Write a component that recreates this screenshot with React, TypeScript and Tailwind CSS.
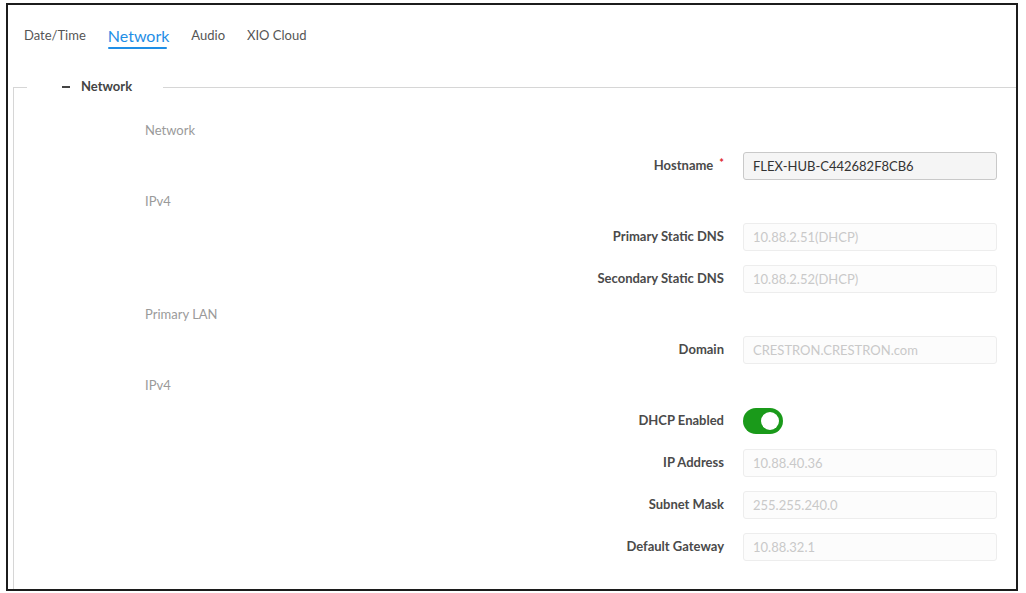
import React, { useState } from 'react';

type Row =
  | { kind: 'section'; label: string }
  | { kind: 'field'; label: string; value: string; editable?: boolean; required?: boolean }
  | { kind: 'toggle'; label: string };

const rows: Row[] = [
  { kind: 'section', label: 'Network' },
  { kind: 'field', label: 'Hostname', value: 'FLEX-HUB-C442682F8CB6', editable: true, required: true },
  { kind: 'section', label: 'IPv4' },
  { kind: 'field', label: 'Primary Static DNS', value: '10.88.2.51(DHCP)' },
  { kind: 'field', label: 'Secondary Static DNS', value: '10.88.2.52(DHCP)' },
  { kind: 'section', label: 'Primary LAN' },
  { kind: 'field', label: 'Domain', value: 'CRESTRON.CRESTRON.com' },
  { kind: 'section', label: 'IPv4' },
  { kind: 'toggle', label: 'DHCP Enabled' },
  { kind: 'field', label: 'IP Address', value: '10.88.40.36' },
  { kind: 'field', label: 'Subnet Mask', value: '255.255.240.0' },
  { kind: 'field', label: 'Default Gateway', value: '10.88.32.1' },
];

const tabs = ['Date/Time', 'Network', 'Audio', 'XIO Cloud'];

const App: React.FC = () => {
  const [activeTab, setActiveTab] = useState('Network');
  const [dhcp, setDhcp] = useState(true);
  const [hostname, setHostname] = useState('FLEX-HUB-C442682F8CB6');

  return (
    <div className="w-[1026px] h-[593px] bg-white font-['Lato','Liberation_Sans',sans-serif]">
      <div className="ml-[6px] mt-[3px] w-[1012px] h-[588px] border-2 border-[#1c1c1c] overflow-hidden flex flex-col">
        {/* Tabs */}
        <div className="h-[72px] shrink-0 pl-[16px] pt-[18px] flex items-start gap-[22px]">
          {tabs.map(tab => (
            <button
              key={tab}
              onClick={() => setActiveTab(tab)}
              className={`flex flex-col items-start ${activeTab === tab ? 'text-[#1f8ee6] text-[16px] pt-[3px]' : 'text-[#555] text-[13px] pt-[2px]'}`}
            >
              <span className="leading-[20px]">{tab}</span>
              {activeTab === tab && <span className="mt-[1px] h-[2px] w-[59px] bg-[#1f8ee6] rounded-full" />}
            </button>
          ))}
        </div>

        {/* Network fieldset */}
        <fieldset className="ml-[5px] w-[1010px] grow border-t border-l border-[#d6d6d6] pt-[19px]">
          <legend className="ml-[13px] pl-[35px] pr-[31px] h-[20px] flex items-center text-[13px] font-bold text-[#444]">
            <span className="w-[8px] h-[2px] bg-[#444] mr-[11px]" />
            Network
          </legend>

          {rows.map((row, i) => {
            if (row.kind === 'section') {
              return (
                <div key={i} className="h-[29px] flex items-center pl-[131px] text-[13px] text-[#9a9a9a]">
                  {row.label}
                </div>
              );
            }
            return (
              <div key={i} className="h-[42px] flex items-center">
                <label className="w-[710px] text-right text-[13px] font-bold text-[#4a4a4a]">
                  {row.label}
                  {row.kind === 'field' && row.required && (
                    <span className="text-[#e0262b] ml-[6px] relative top-[-3px] text-[11px]">*</span>
                  )}
                </label>
                <div className="ml-[19px]">
                  {row.kind === 'toggle' ? (
                    <button
                      onClick={() => setDhcp(!dhcp)}
                      className={`w-[40px] h-[26px] rounded-full p-[4px] flex ${dhcp ? 'bg-[#1a9a1a] justify-end' : 'bg-[#ccc] justify-start'}`}
                    >
                      <span className="w-[18px] h-[18px] rounded-full bg-white" />
                    </button>
                  ) : row.editable ? (
                    <input
                      value={hostname}
                      onChange={e => setHostname(e.target.value)}
                      className="w-[254px] h-[28px] px-[9px] rounded-[3px] border border-[#c9c9c9] bg-[#f5f5f5] text-[13px] text-[#333] outline-none"
                    />
                  ) : (
                    <input
                      value={row.value}
                      disabled
                      readOnly
                      className="w-[254px] h-[28px] px-[9px] rounded-[3px] border border-[#ededed] bg-[#fcfcfc] text-[13px] text-[#c9c9c9] outline-none"
                    />
                  )}
                </div>
              </div>
            );
          })}
        </fieldset>
      </div>
    </div>
  );
};

export default App;
